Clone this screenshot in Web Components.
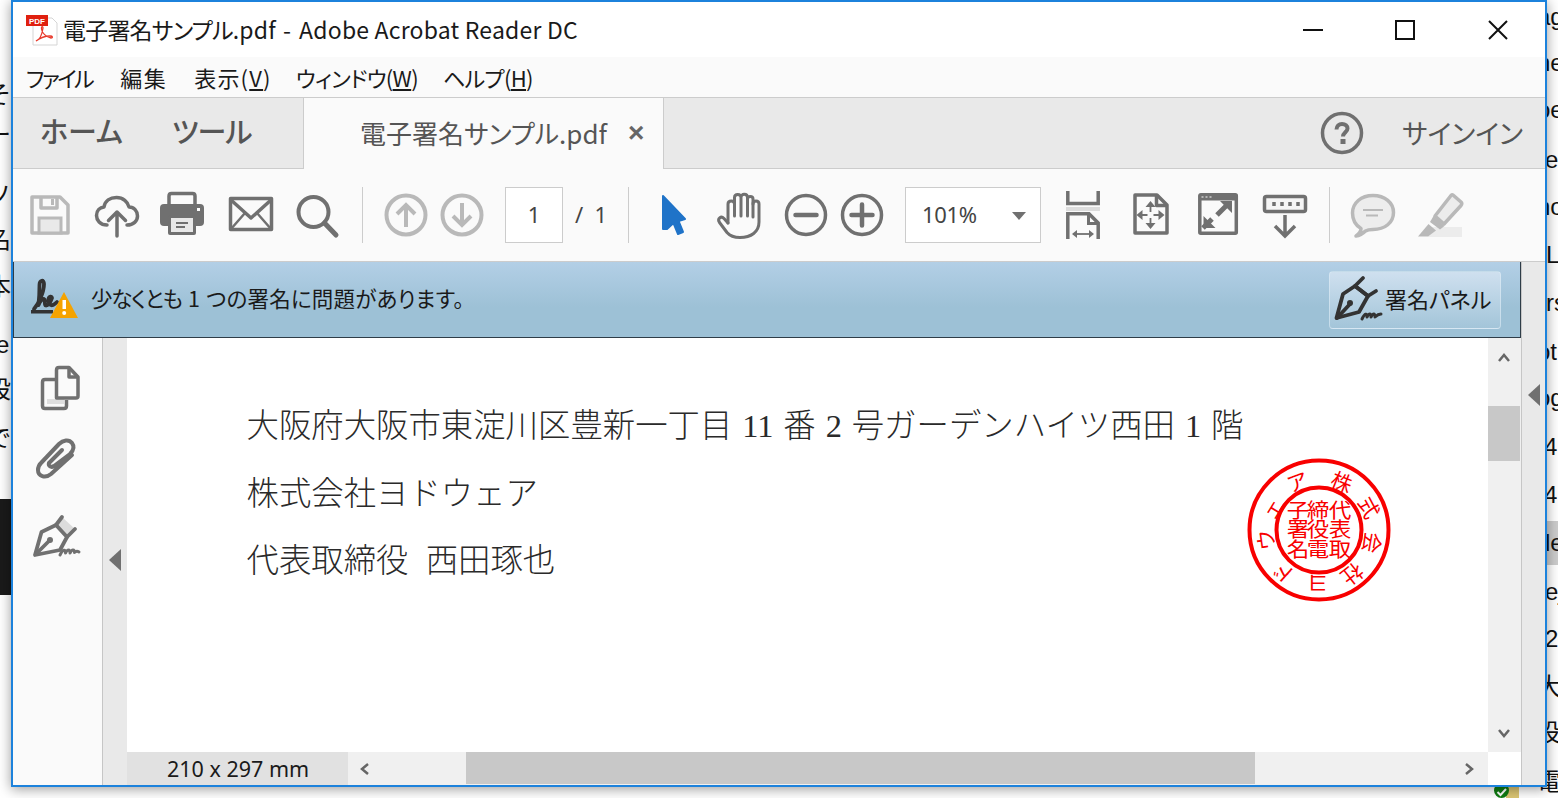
<!DOCTYPE html>
<html lang="ja">
<head>
<meta charset="utf-8">
<title>電子署名サンプル.pdf - Adobe Acrobat Reader DC</title>
<style>
  html, body { margin: 0; height: 100%; background: #fff; overflow: hidden; }
</style>
</head>
<body>
<desktop-backdrop></desktop-backdrop>
<reader-window>
  <title-bar slot="top"><span style="letter-spacing:-.8px">電子署名サンプル</span>.pdf<span style="margin:0 8px 0 7px">-</span>Adobe Acrobat Reader DC</title-bar>
  <menu-bar slot="top"></menu-bar>
  <tab-row slot="top"></tab-row>
  <tool-bar slot="top"></tool-bar>
  <sign-banner slot="main"><span style="letter-spacing:-1.200px">少なくとも</span> 1 <span style="letter-spacing:.2px">つの署名に問題があります。</span></sign-banner>
  <side-rail slot="viewer"></side-rail>
  <doc-view slot="viewer">
    <div style="white-space:pre">大阪府大阪市東淀川区豊新一丁目 11 番 2 号ガーデンハイツ西田 1 階</div>
    <div>株式会社ヨドウェア</div>
    <div style="white-space:pre;word-spacing:.5px">代表取締役  西田琢也</div>
  </doc-view>
</reader-window>

<script>
const GREY = '#707070';
const PALE = '#b9b9b9';

// every icon is drawn on a 48x48 box
const ICONS = {
  save: `<g fill="none" stroke="${PALE}" stroke-width="3.5" stroke-linejoin="round">
      <path d="M6 6H34L42 14V42H6Z"/><path d="M15 6V17H31V6"/></g>
      <rect x="25" y="8" width="3" height="6" fill="${PALE}"/>
      <rect x="13" y="27" width="22" height="15" fill="#e9e9e9" stroke="${PALE}" stroke-width="3"/>`,
  cloud: `<g fill="none" stroke="${GREY}" stroke-width="3.5" stroke-linecap="round" stroke-linejoin="round">
      <path d="M14 34C7 34 3.5 29 3.5 24.500C3.500 19.500 7 16.500 11 16C12 10 17 6.500 23.500 6.500C30 6.500 35 11 36 16C41 16 44.500 20 44.500 25C44.500 30 40.500 34 34 34"/>
      <path d="M24 45V21M15.500 29.500L24 21L32.500 29.500"/></g>`,
  print: `<path d="M11 15V5Q11 2.500 13.500 2.500H34.500Q37 2.500 37 5V15" fill="none" stroke="${GREY}" stroke-width="3.5"/>
      <rect x="2" y="13" width="44" height="22" rx="4" fill="${GREY}"/>
      <rect x="10" y="24" width="28" height="20" rx="2" fill="${GREY}"/>
      <rect x="13" y="27" width="22" height="14" fill="#e8e8e8"/>
      <path d="M18 32H30M18 36H27" stroke="${GREY}" stroke-width="2"/>
      <rect x="39" y="17" width="3" height="3" fill="#fff"/>`,
  mail: `<g fill="none" stroke="${GREY}" stroke-width="3.5" stroke-linejoin="round">
      <rect x="3.500" y="7.500" width="41" height="31"/>
      <path d="M4 9L24 27L44 9"/><path d="M4 38L18 22M44 38L30 22" stroke-width="2.500"/></g>`,
  search: `<g fill="none" stroke="${GREY}" stroke-width="4" stroke-linecap="round">
      <circle cx="20.500" cy="21" r="15"/><path d="M31.500 32L43 44" stroke-width="5"/></g>`,
  up: `<g fill="none" stroke="${PALE}" stroke-width="4"><circle cx="24" cy="24" r="19.500"/>
      <path d="M24 36V14M15 23L24 14L33 23"/></g>`,
  down: `<g fill="none" stroke="${PALE}" stroke-width="4"><circle cx="24" cy="24" r="19.500"/>
      <path d="M24 12V34M15 25L24 34L33 25"/></g>`,
  cursor: `<path d="M14 5L36 28L29.500 30L34 41L29 43L24.500 32L18 38L14 38Z" fill="#1f73c8" stroke="#1f73c8" stroke-width="2" stroke-linejoin="round"/>`,
  hand: `<g transform="translate(1 0)" fill="none" stroke="${GREY}" stroke-width="3" stroke-linecap="round" stroke-linejoin="round">
      <path d="M12 32L8 27.500C5 24.500 1 27.500 3.500 31.500L11 41.500C14 45 18 46.500 24 46.500C35 46.500 43 41 43 31V13C43 9 37 9 37 13V26"/>
      <path d="M12 32V13C12 9 18.500 9 18.500 13V25M18.500 13V6.500C18.500 2.500 25 2.500 25 6.500V25M25 6.500C25 2 31.500 2.500 31.500 6.500V25M31.500 8C31.500 4.500 37 4.500 37 8V13"/></g>`,
  minus: `<g fill="none" stroke="${GREY}" stroke-width="3.5"><circle cx="24" cy="24" r="19.500"/>
      <path d="M13.500 24H34.500" stroke-width="4.500" stroke-linecap="round"/></g>`,
  plus: `<g fill="none" stroke="${GREY}" stroke-width="3.5"><circle cx="24" cy="24" r="19.500"/>
      <path d="M13.500 24H34.500M24 13.500V34.500" stroke-width="4.500" stroke-linecap="round"/></g>`,
  fitwidth: `<g fill="none" stroke="${GREY}" stroke-width="3.5">
      <path d="M8.800 0V12.500H39.200V0"/><path d="M8.800 48V22.800H30L39.200 32V48"/>
      <path d="M29.500 23V32.500H39" stroke-width="3"/>
      <path d="M14 43H34" stroke-width="1.800"/></g>
      <rect x="7" y="16" width="34" height="4" fill="#dcdcdc"/>
      <path d="M13 43L18 39V47ZM35 43L30 39V47Z" fill="${GREY}"/>`,
  pagepan: `<g fill="none" stroke="${GREY}" stroke-width="3.500" stroke-linejoin="round">
      <path d="M8 4H30L40 14V42H8Z"/><path d="M29.500 4V14.500H40"/>
      <path d="M23.500 14V21M23.500 27V34M13 24H20.500M26.500 24H34" stroke-width="1.800"/></g>
      <path d="M23.500 10L28.500 16H18.500ZM23.500 38L18.500 32H28.500ZM9.500 24L15.500 19V29ZM37.500 24L31.500 19V29Z" fill="${GREY}"/>`,
  fullscreen: `<g fill="none" stroke="${GREY}" stroke-width="3.500">
      <rect x="5.800" y="3.800" width="36.500" height="38.500" rx="1"/>
      <path d="M23 24L32 15M9 37L18 28" stroke-width="5"/></g>
      <rect x="5" y="3" width="38" height="6.500" fill="${GREY}"/>
      <path d="M7.500 6H9.500M11.500 6H13.500M15.500 6H17.500" stroke="#ccc" stroke-width="1.500"/>
      <path d="M38 10V22L26 10ZM9.500 37V25L21.500 37Z" fill="${GREY}"/>`,
  readbar: `<rect x="3.500" y="5.500" width="41" height="15" rx="2" fill="#f5f5f5" stroke="${GREY}" stroke-width="3.500"/>
      <path d="M13 11V15M21 11V15M29 11V15M37 11V15" stroke="${GREY}" stroke-width="3.500"/>
      <path d="M24 24V44M14 35L24 45L34 35" fill="none" stroke="${GREY}" stroke-width="3.500"/>`,
  comment: `<path d="M12 37.500C6 34 3.500 28 3.500 22C3.500 12 12 4.500 24 4.500C36 4.500 44.500 12 44.500 21.500C44.500 31.500 36 38.500 24 38.500C21 38.500 19 38.500 16.500 40C14 42.500 11 44.500 7 45C10 43 12 41 12 37.500Z" fill="#ededed" stroke="${PALE}" stroke-width="3.500" stroke-linejoin="round"/>
      <path d="M14 19H34M17 24.500H29" stroke="${PALE}" stroke-width="2"/>`,
  highlight: `<rect x="12" y="36" width="34" height="10" fill="#ececec"/>
      <path d="M37 4L45 11Q46.500 12.500 45 14.500L28 33L19 25L35 4.500Q36 3.500 37 4Z" fill="#ececec" stroke="${PALE}" stroke-width="3.500" stroke-linejoin="round"/>
      <path d="M17.500 25L28.500 35L24 38.500L14 31Z" fill="${PALE}"/>
      <path d="M12.500 33L20 39.500L12 45.500H2Z" fill="${PALE}"/>`,
  help: `<circle cx="24" cy="24" r="19.500" fill="none" stroke="${GREY}" stroke-width="3.500"/>
      <path d="M18.500 20.500C18.500 17 21 15 24 15C27.500 15 29.500 17 29.500 19.500C29.500 23 25 23.500 25 27.500" fill="none" stroke="${GREY}" stroke-width="4"/>
      <rect x="22.500" y="30" width="5" height="5" fill="${GREY}"/>`,
  pages: `<rect x="13" y="35" width="17" height="5" fill="#dfdfdf"/>
      <g fill="none" stroke="${GREY}" stroke-width="3.500" stroke-linejoin="round">
      <path d="M21 15.500H11Q8.500 15.500 8.500 18V42Q8.500 44.500 11 44.500H30Q32.500 44.500 32.500 42V36"/>
      <path d="M22.500 34V6Q22.500 3.500 25 3.500H35L44 13V32Q44 34 42 34Z"/><path d="M35 4V13H44"/></g>`,
  clip: `<path d="M41 21L20 40C14 45 7 42 7 36C7 33 8 31 10 29L28 10C32 6 38 5 41 9C44 13 42 17 39 20L23 32C20 34 17 32 18 29L31 16" fill="none" stroke="${GREY}" stroke-width="4" stroke-linecap="round" stroke-linejoin="round"/>`,
  pen: `<path d="M24 13L30 5L43 17L35 25Z" fill="#dcdcdc"/>
      <g fill="none" stroke="${GREY}" stroke-width="3.800" stroke-linecap="round" stroke-linejoin="round">
      <path d="M3 43L9.500 20L24 13L35 25L28 38Z"/><path d="M4 42L17 29"/><path d="M24 13L30 5M35 25L43 17"/>
      <path d="M28 43C31 37 33.500 37 33.500 41C35.500 37 38 37 38 41C40 37 42.500 37 42.500 40.500C44 39 45.500 39 47 40" stroke-width="3"/></g>
      <circle cx="18" cy="28" r="3" fill="${GREY}"/>`,
  penDark: `<g fill="none" stroke="#333" stroke-width="3.800" stroke-linecap="round" stroke-linejoin="round">
      <path d="M1.500 42L8 18L20 10L33 20L24 36Z"/><path d="M2 42L15 28"/>
      <path d="M20 10L28 2M33 20L41 15M20 10L33 20"/>
      <path d="M27 43C30 37 32 37 32 41C34 37 36 37 36 41C38 37 40 37 40 41C42 39 44 38 46 38" stroke-width="3"/></g>
      <circle cx="15" cy="27" r="3" fill="#333"/>`,
  signWarn: `<g fill="none" stroke="#333" stroke-linecap="round" stroke-linejoin="round">
      <path d="M3 33C8 27 13 16 13 8C13 3 8.500 4 8.500 9C8.500 16 8 24 7.500 29C9 25 12 22 13.500 23.500C14.500 26 13 29 15 29.500C18 29.500 20 25 21 22C21 20 18 20 17.500 23C17 27 19 30 22 29C24 28 25 27 26 26" stroke-width="3.800"/></g>
      <rect x="0" y="34" width="22" height="3.500" fill="#333"/>
      <path d="M33 16L47 42H19Z" fill="#f5a300"/>
      <rect x="31.500" y="24" width="3.500" height="9" fill="#fff"/><circle cx="33.200" cy="37" r="2" fill="#fff"/>`
};

class ToolIcon extends HTMLElement {
  connectedCallback() {
    const size = this.getAttribute('size') || 48;
    if (!this.shadowRoot) this.attachShadow({ mode: 'open' });
    this.shadowRoot.innerHTML = `
      <style>:host { display: block; width: ${size}px; height: ${size}px; flex: none; } svg { display: block; overflow: visible; }</style>
      <svg width="${size}" height="${size}" viewBox="0 0 48 48">${ICONS[this.getAttribute('name')]}</svg>`;
  }
}

class DesktopBackdrop extends HTMLElement {
  constructor() {
    super();
    const leftBits = [[80, -13, 'そ'], [120, -13, 'ー'], [180, -13, 'ソ'], [225, -13, '名'], [272, -13, '本'], [330, -4, 'e'], [375, -13, '設'], [424, -13, 'で']];
    const rightBits = [[2, 1537, 'ag'], [48, 1537, 'ne'], [95, 1537, 'oe'], [145, 1545, 'e'], [192, 1537, 'no'], [240, 1546, 'LI'], [288, 1546, 'rs'], [337, 1537, 'ot'], [383, 1537, 'og'], [432, 1544, '4'], [480, 1544, '4'], [528, 1537, 'de'], [577, 1545, 'ej'], [624, 1545, '2'], [672, 1537, '大'], [718, 1537, '役'], [767, 1537, '電']];
    const bits = [...leftBits, ...rightBits].map(([y, x, t]) => `<span style="left:${x}px;top:${y}px">${t}</span>`).join('');
    this.attachShadow({ mode: 'open' }).innerHTML = `
      <style>
        :host { display: block; position: absolute; inset: 0; overflow: hidden; font: 24px/30px "Liberation Sans", "Noto Sans CJK JP", sans-serif; color: #111; }
        span { position: absolute; white-space: nowrap; }
        .block { position: absolute; left: 0; top: 499px; width: 12px; height: 96px; background: #1a1a1a; }
        .row { position: absolute; left: 1547px; top: 521px; width: 11px; height: 44px; background: #ccc; }
        .tag { position: absolute; left: 1506px; top: 787px; width: 13px; height: 11px; background: #dcc673; }
        .tick { position: absolute; left: 1494px; top: 783px; display: block; }
      </style>
      <div class="row"></div><div class="block"></div><div class="tag"></div>
      ${bits}
      <svg class="tick" width="15" height="15" viewBox="0 0 15 15"><circle cx="7.500" cy="7.500" r="7.500" fill="#0f7d12"/><path d="M3.500 9L6.500 12L12 6" fill="none" stroke="#fff" stroke-width="2"/></svg>`;
  }
}

class ReaderWindow extends HTMLElement {
  constructor() {
    super();
    this.attachShadow({ mode: 'open' }).innerHTML = `
      <style>
        :host {
          display: flex; flex-direction: column; box-sizing: border-box;
          position: absolute; left: 11px; top: 0; width: 1536px; height: 787px;
          border: 2px solid #1c82dc; background: #fafafa;
          box-shadow: 0 2px 12px rgba(0, 0, 0, .4);
          font-family: "Noto Sans CJK JP", "Noto Sans", sans-serif; color: #222;
        }
        .body { flex: 1; display: flex; min-height: 0; }
        .main { flex: 1; display: flex; flex-direction: column; min-width: 0; }
        .viewer { flex: 1; display: flex; min-height: 0; }
        .pane { width: 24px; box-sizing: border-box; flex: none; background: #e9e9e9; border-left: 1px solid #c6c6c6; display: flex; align-items: center; justify-content: center; }
        .pane i { display: block; margin-top: -1px; border: solid transparent; border-width: 11px 12px 11px 0; border-right-color: ${GREY}; position: relative; top: -128px; }
      </style>
      <slot name="top"></slot>
      <div class="body">
        <div class="main">
          <slot name="main"></slot>
          <div class="viewer"><slot name="viewer"></slot></div>
        </div>
        <div class="pane"><i></i></div>
      </div>`;
  }
}

class TitleBar extends HTMLElement {
  constructor() {
    super();
    this.attachShadow({ mode: 'open' }).innerHTML = `
      <style>
        :host { display: flex; align-items: center; height: 55px; flex: none; box-sizing: border-box; padding-right: 1px; background: #fff; font-size: 23px; color: #1a1a1a; }
        .logo { margin: 0 5px 0 12px; flex: none; }
        .text { flex: 1; white-space: nowrap; font-feature-settings: "palt"; letter-spacing: .2px; position: relative; top: -1px; }
        .win { width: 93px; height: 55px; flex: none; display: flex; align-items: center; justify-content: center; }
        svg { display: block; }
      </style>
      <svg class="logo" width="33" height="32" viewBox="0 0 33 32">
        <path d="M8 4H27L32 9V31H8Z" fill="#fff" stroke="#d5d5d5"/>
        <rect x="1" y="1" width="22" height="11" fill="#e0200f"/>
        <text x="4" y="9.500" font-family="Liberation Sans" font-size="8" font-weight="700" fill="#fff">PDF</text>
        <path d="M11 27C14 26 17 21 18 14C18 12 16 12 16.500 15C17 19 21 23 26 24C28 24 28 22 25 22C21 22 15 24 11 27Z" fill="none" stroke="#e8392b" stroke-width="1.300"/>
      </svg>
      <div class="text"><slot></slot></div>
      <div class="win"><svg width="22" height="4" style="margin-left:4px"><rect y="1" width="20" height="2" fill="#111"/></svg></div>
      <div class="win"><svg width="20" height="20"><rect x="1" y="1" width="18" height="18" fill="none" stroke="#111" stroke-width="2"/></svg></div>
      <div class="win"><svg width="20" height="20"><path d="M1 1L19 19M19 1L1 19" stroke="#111" stroke-width="2"/></svg></div>`;
  }
}

class MenuBar extends HTMLElement {
  constructor() {
    super();
    this.attachShadow({ mode: 'open' }).innerHTML = `
      <style>
        :host { display: flex; align-items: center; height: 41px; flex: none; box-sizing: border-box; padding: 0 0 1px 13px; background: #fafafa; border-bottom: 1px solid #ccc; font-size: 22px; color: #1a1a1a; font-feature-settings: "palt"; white-space: nowrap; }
        u { text-underline-offset: 2px; }
      </style>
      <span style="letter-spacing:-2.500px">ファイル</span>
      <span style="letter-spacing:1.500px;margin-left:28px">編集</span>
      <span style="letter-spacing:1.200px;margin-left:27px">表示(<u>V</u>)</span>
      <span style="letter-spacing:-.7px;margin-left:24px">ウィンドウ(<u>W</u>)</span>
      <span style="letter-spacing:-.7px;margin-left:25px">ヘルプ(<u>H</u>)</span>`;
  }
}

class TabRow extends HTMLElement {
  constructor() {
    super();
    this.attachShadow({ mode: 'open' }).innerHTML = `
      <style>
        :host { display: flex; align-items: stretch; height: 71px; flex: none; box-sizing: border-box; background: #e9e9e9; border-bottom: 1px solid #ccc; color: #555; white-space: nowrap; font-feature-settings: "palt"; }
        .home { width: 291px; flex: none; box-sizing: border-box; display: flex; align-items: center; padding: 0 0 6px 27px; gap: 50px; font-size: 29px; font-weight: 500; border-right: 1px solid #ccc; }
        .home span + span { letter-spacing: -.9px; margin-left: -1px; }
        .doc { width: 360px; flex: none; box-sizing: border-box; height: 71px; background: #fafafa; border-right: 1px solid #ccc; display: flex; align-items: center; padding: 0 0 2px 56px; font-size: 26px; }
        .close { margin-left: 21px; font-size: 28px; font-weight: 700; color: #666; font-family: "Liberation Sans", sans-serif; }
        .end { flex: 1; display: flex; align-items: center; justify-content: flex-end; padding-right: 22px; font-size: 27px; }
        .end span { margin-left: 36px; position: relative; top: -1px; }
      </style>
      <div class="home"><span>ホーム</span><span>ツール</span></div>
      <div class="doc"><span>電子署名サンプル.pdf</span><span class="close">×</span></div>
      <div class="end"><tool-icon name="help"></tool-icon><span>サインイン</span></div>`;
  }
}

class ToolBar extends HTMLElement {
  constructor() {
    super();
    const item = (name, gap) => `<tool-icon name="${name}" style="margin-left:${gap}px"></tool-icon>`;
    const sep = (gap) => `<div class="sep" style="margin-left:${gap}px"></div>`;
    this.attachShadow({ mode: 'open' }).innerHTML = `
      <style>
        :host { display: flex; align-items: center; height: 93px; flex: none; box-sizing: border-box; padding-left: 13px; background: #fafafa; border-bottom: 1px solid #ccc; color: #444; font-family: "Noto Sans", sans-serif; }
        .sep { width: 1px; height: 56px; background: #ccc; flex: none; }
        .box { height: 56px; box-sizing: border-box; flex: none; background: #fff; border: 1px solid #ccc; display: flex; align-items: center; padding-bottom: 2px; font-size: 22px; }
        .page { width: 58px; justify-content: center; margin-left: 19px; }
        .total { width: 33px; margin-left: 12px; font-size: 22px; white-space: pre; flex: none; padding-bottom: 2px; }
        .zoom { width: 136px; margin-left: 19px; padding-left: 16px; justify-content: space-between; letter-spacing: -.3px; }
        .zoom i { display: block; margin: 3px 14px 0 0; border: solid transparent; border-width: 8px 7.500px 0; border-top-color: ${GREY}; }
      </style>
      ${item('save', 0)}${item('cloud', 19)}${item('print', 17)}${item('mail', 21)}${item('search', 18)}
      ${sep(21)}
      ${item('up', 19)}${item('down', 8)}
      <div class="box page">1</div><div class="total">/  1</div>
      ${sep(20)}
      ${item('cursor', 20)}${item('hand', 18)}${item('minus', 19)}${item('plus', 8)}
      <div class="box zoom"><span>101%</span><i></i></div>
      ${item('fitwidth', 18)}${item('pagepan', 20)}${item('fullscreen', 19)}${item('readbar', 19)}
      ${sep(20)}
      ${item('comment', 19)}${item('highlight', 19)}`;
  }
}

class SignBanner extends HTMLElement {
  constructor() {
    super();
    this.attachShadow({ mode: 'open' }).innerHTML = `
      <style>
        :host { display: flex; align-items: center; height: 76px; flex: none; box-sizing: border-box; padding-left: 17px; background: linear-gradient(#b3cfe6, #9dc1d6 60%); border: solid #2f3d48; border-width: 0 1px 1px 1px; font-size: 21.500px; color: #1a1a1a; white-space: nowrap; font-feature-settings: "palt"; }
        .msg { flex: 1; margin-left: 12px; word-spacing: 1.500px; position: relative; top: -2px; }
        .btn { display: flex; align-items: center; box-sizing: border-box; width: 172px; height: 58px; margin-right: 19px; padding-left: 5px; gap: 2px; border-radius: 4px; border: 1px solid rgba(220, 235, 245, .6); background: linear-gradient(#cfe0ef, #a3c5d9); font-size: 22px; }
        .btn span { position: relative; top: -2px; }
      </style>
      <tool-icon name="signWarn"></tool-icon>
      <div class="msg"><slot></slot></div>
      <div class="btn"><tool-icon name="penDark"></tool-icon><span>署名パネル</span></div>`;
  }
}

class SideRail extends HTMLElement {
  constructor() {
    super();
    this.attachShadow({ mode: 'open' }).innerHTML = `
      <style>
        :host { display: flex; flex: none; }
        .rail { width: 90px; box-sizing: border-box; background: #fafafa; border-right: 1px solid #c6c6c6; display: flex; flex-direction: column; align-items: center; padding-top: 26px; }
        .rail tool-icon:nth-child(2) { margin: 22px 5px 0 0; }
        .rail tool-icon:nth-child(3) { margin: 30px 4px 0 0; }
        .gutter { width: 24px; background: #e9e9e9; padding: 211px 0 0 6px; box-sizing: border-box; }
        .gutter i { display: block; width: 0; border: solid transparent; border-width: 11px 12px 11px 0; border-right-color: ${GREY}; }
      </style>
      <div class="rail"><tool-icon name="pages"></tool-icon><tool-icon name="clip"></tool-icon><tool-icon name="pen"></tool-icon></div>
      <div class="gutter"><i></i></div>`;
  }
}

class HankoSeal extends HTMLElement {
  constructor() {
    super();
    const ring = [['株', 1342, 481, 22], ['式', 1370, 507, 62], ['会', 1373, 543, 100], ['社', 1353, 575, 142], ['ヨ', 1318, 585, 180], ['ド', 1283, 574, 222], ['ウ', 1265, 540, 262], ['ェ', 1272, 508, 302], ['ア', 1297, 481, 340]];
    const cx = 1319, cy = 530;
    const ringText = ring.map(([t, x, y, r]) => {
      const sx = x - cx + 75, sy = y - cy + 75;
      return `<text x="${sx}" y="${sy}" transform="rotate(${r} ${sx} ${sy})" text-anchor="middle" dominant-baseline="central" font-size="21">${t}</text>`;
    }).join('');
    const grid = [['子', 54, 54], ['締', 74, 54], ['代', 96, 54], ['署', 54, 73], ['役', 74, 73], ['表', 96, 73], ['名', 54, 93], ['電', 74, 93], ['取', 96, 93]];
    const gridText = grid.map(([t, x, y]) => `<text transform="translate(${x} ${y}) scale(.98 .9)" text-anchor="middle" dominant-baseline="central" font-size="23">${t}</text>`).join('');
    this.attachShadow({ mode: 'open' }).innerHTML = `
      <style>:host { position: absolute; left: 1117px; top: 117px; width: 150px; height: 150px; } svg { display: block; }</style>
      <svg width="150" height="150" viewBox="0 0 150 150" fill="#f80000" font-family="Noto Sans CJK JP, sans-serif" font-weight="400">
        <circle cx="75" cy="75" r="69.500" fill="none" stroke="#f80000" stroke-width="4"/>
        <circle cx="75" cy="75" r="42.500" fill="none" stroke="#f80000" stroke-width="4"/>
        ${ringText}${gridText}
      </svg>`;
  }
}

class DocView extends HTMLElement {
  constructor() {
    super();
    this.attachShadow({ mode: 'open' }).innerHTML = `
      <style>
        :host { flex: 1; min-width: 0; display: grid; grid-template-columns: 1fr 33px; grid-template-rows: 1fr 33px; }
        .page { position: relative; background: #fff; padding: 55px 0 0 119.500px; font: 300 32.400px/67.500px "Liberation Serif", "Noto Sans CJK JP", serif; word-spacing: 1.800px; color: #2a2a2a; overflow: hidden; }
        .vbar { background: #f0f0f0; position: relative; display: flex; flex-direction: column; align-items: center; justify-content: space-between; padding: 15px 1px 14px 0; }
        .vbar b { position: absolute; left: 0; top: 68px; width: 32px; height: 55px; background: #c8c8c8; }
        .hbar { display: flex; align-items: center; background: #f0f0f0; }
        .size { width: 221px; height: 100%; flex: none; box-sizing: border-box; background: #e1e1e1; padding: 0 0 1px 40px; display: flex; align-items: center; font: 21.500px "Noto Sans", sans-serif; color: #1a1a1a; }
        .hbar svg { flex: none; }
        .thumb { width: 789px; height: 32px; margin: 0 0 1px 97px; flex: none; background: #c8c8c8; }
        .corner { background: #fff; }
      </style>
      <div class="page"><slot></slot><hanko-seal></hanko-seal></div>
      <div class="vbar">
        <svg width="12" height="9"><path d="M1 8L6 2L11 8" fill="none" stroke="#666" stroke-width="2.500"/></svg>
        <svg width="12" height="9"><path d="M1 1L6 7L11 1" fill="none" stroke="#666" stroke-width="2.500"/></svg>
        <b></b>
      </div>
      <div class="hbar">
        <div class="size">210 x 297 mm</div>
        <svg width="9" height="12" style="margin-left:12px"><path d="M8 1L2 6L8 11" fill="none" stroke="#666" stroke-width="2.500"/></svg>
        <div class="thumb"></div>
        <svg width="9" height="12" style="margin-left:210px"><path d="M1 1L7 6L1 11" fill="none" stroke="#666" stroke-width="2.500"/></svg>
      </div>
      <div class="corner"></div>`;
  }
}

customElements.define('tool-icon', ToolIcon);
customElements.define('desktop-backdrop', DesktopBackdrop);
customElements.define('reader-window', ReaderWindow);
customElements.define('title-bar', TitleBar);
customElements.define('menu-bar', MenuBar);
customElements.define('tab-row', TabRow);
customElements.define('tool-bar', ToolBar);
customElements.define('sign-banner', SignBanner);
customElements.define('side-rail', SideRail);
customElements.define('hanko-seal', HankoSeal);
customElements.define('doc-view', DocView);
</script>
</body>
</html>
